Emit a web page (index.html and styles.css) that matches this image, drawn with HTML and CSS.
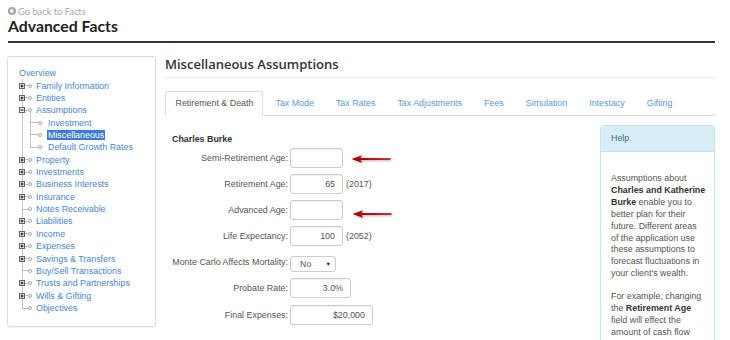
FILE: index.html
```html
<!DOCTYPE html>
<html>
<head>
<meta charset="utf-8">
<title>Advanced Facts</title>
<link rel="stylesheet" href="styles.css">
</head>
<body>
<div class="page">
  <div class="back">
    <svg viewBox="0 0 8 8" class="back-ico"><circle cx="4" cy="4" r="4" fill="#a5a5a5"/><path d="M4.6 2 L2.5 4 L4.6 6 M2.7 4 H6" stroke="#fff" stroke-width="1.2" fill="none"/></svg>
    <span>Go back to Facts</span>
  </div>
  <h1 class="title">Advanced Facts</h1>
  <div class="rule"></div>

  <div class="cols">
    <nav class="tree">
      <div class="row"><a href="#">Overview</a></div>
      <ul class="lvl1">
        <li><div class="row"><span class="conn"><svg class="exp" viewBox="0 0 6 6"><rect x=".5" y=".5" width="5" height="5" fill="#eee" stroke="#666"/><path d="M1.5 3h3M3 1.5v3" stroke="#111"/></svg></span><span class="dot"></span><a href="#">Family Information</a></div></li>
        <li><div class="row"><span class="conn"><svg class="exp" viewBox="0 0 6 6"><rect x=".5" y=".5" width="5" height="5" fill="#eee" stroke="#666"/><path d="M1.5 3h3M3 1.5v3" stroke="#111"/></svg></span><span class="dot"></span><a href="#">Entities</a></div></li>
        <li><div class="row"><span class="conn"><svg class="exp" viewBox="0 0 6 6"><rect x=".5" y=".5" width="5" height="5" fill="#eee" stroke="#666"/><path d="M1.5 3h3" stroke="#111"/></svg></span><span class="dot"></span><a href="#">Assumptions</a></div>
          <ul class="lvl2">
            <li><div class="row"><span class="conn"></span><span class="dot"></span><a href="#">Investment</a></div></li>
            <li><div class="row"><span class="conn"></span><span class="dot"></span><a href="#" class="sel">Miscellaneous</a></div></li>
            <li><div class="row"><span class="conn"></span><span class="dot"></span><a href="#">Default Growth Rates</a></div></li>
          </ul>
        </li>
        <li><div class="row"><span class="conn"><svg class="exp" viewBox="0 0 6 6"><rect x=".5" y=".5" width="5" height="5" fill="#eee" stroke="#666"/><path d="M1.5 3h3M3 1.5v3" stroke="#111"/></svg></span><span class="dot"></span><a href="#">Property</a></div></li>
        <li><div class="row"><span class="conn"><svg class="exp" viewBox="0 0 6 6"><rect x=".5" y=".5" width="5" height="5" fill="#eee" stroke="#666"/><path d="M1.5 3h3M3 1.5v3" stroke="#111"/></svg></span><span class="dot"></span><a href="#">Investments</a></div></li>
        <li><div class="row"><span class="conn"><svg class="exp" viewBox="0 0 6 6"><rect x=".5" y=".5" width="5" height="5" fill="#eee" stroke="#666"/><path d="M1.5 3h3M3 1.5v3" stroke="#111"/></svg></span><span class="dot"></span><a href="#">Business Interests</a></div></li>
        <li><div class="row"><span class="conn"><svg class="exp" viewBox="0 0 6 6"><rect x=".5" y=".5" width="5" height="5" fill="#eee" stroke="#666"/><path d="M1.5 3h3M3 1.5v3" stroke="#111"/></svg></span><span class="dot"></span><a href="#">Insurance</a></div></li>
        <li><div class="row"><span class="conn"></span><span class="dot"></span><a href="#">Notes Receivable</a></div></li>
        <li><div class="row"><span class="conn"><svg class="exp" viewBox="0 0 6 6"><rect x=".5" y=".5" width="5" height="5" fill="#eee" stroke="#666"/><path d="M1.5 3h3M3 1.5v3" stroke="#111"/></svg></span><span class="dot"></span><a href="#">Liabilities</a></div></li>
        <li><div class="row"><span class="conn"><svg class="exp" viewBox="0 0 6 6"><rect x=".5" y=".5" width="5" height="5" fill="#eee" stroke="#666"/><path d="M1.5 3h3M3 1.5v3" stroke="#111"/></svg></span><span class="dot"></span><a href="#">Income</a></div></li>
        <li><div class="row"><span class="conn"><svg class="exp" viewBox="0 0 6 6"><rect x=".5" y=".5" width="5" height="5" fill="#eee" stroke="#666"/><path d="M1.5 3h3M3 1.5v3" stroke="#111"/></svg></span><span class="dot"></span><a href="#">Expenses</a></div></li>
        <li><div class="row"><span class="conn"><svg class="exp" viewBox="0 0 6 6"><rect x=".5" y=".5" width="5" height="5" fill="#eee" stroke="#666"/><path d="M1.5 3h3M3 1.5v3" stroke="#111"/></svg></span><span class="dot"></span><a href="#">Savings &amp; Transfers</a></div></li>
        <li><div class="row"><span class="conn"></span><span class="dot"></span><a href="#">Buy/Sell Transactions</a></div></li>
        <li><div class="row"><span class="conn"><svg class="exp" viewBox="0 0 6 6"><rect x=".5" y=".5" width="5" height="5" fill="#eee" stroke="#666"/><path d="M1.5 3h3M3 1.5v3" stroke="#111"/></svg></span><span class="dot"></span><a href="#">Trusts and Partnerships</a></div></li>
        <li><div class="row"><span class="conn"><svg class="exp" viewBox="0 0 6 6"><rect x=".5" y=".5" width="5" height="5" fill="#eee" stroke="#666"/><path d="M1.5 3h3M3 1.5v3" stroke="#111"/></svg></span><span class="dot"></span><a href="#">Wills &amp; Gifting</a></div></li>
        <li><div class="row"><span class="conn"></span><span class="dot"></span><a href="#">Objectives</a></div></li>
      </ul>
    </nav>

    <main class="main">
      <h2 class="heading">Miscellaneous Assumptions</h2>
      <ul class="tabs">
        <li><a href="#" class="active">Retirement &amp; Death</a></li>
        <li><a href="#">Tax Mode</a></li>
        <li><a href="#">Tax Rates</a></li>
        <li><a href="#">Tax Adjustments</a></li>
        <li><a href="#">Fees</a></li>
        <li><a href="#">Simulation</a></li>
        <li><a href="#">Intestacy</a></li>
        <li><a href="#">Gifting</a></li>
      </ul>
      <div class="content">
        <div class="form">
          <div class="person">Charles Burke</div>
          <div class="grid">
            <label>Semi-Retirement Age:</label>
            <div class="field"><input class="inp w53" type="text" value=""></div>
            <label>Retirement Age:</label>
            <div class="field"><input class="inp w53" type="text" value="65"><span class="suf">(2017)</span></div>
            <label>Advanced Age:</label>
            <div class="field"><input class="inp w53" type="text" value=""></div>
            <label>Life Expectancy:</label>
            <div class="field"><input class="inp w53" type="text" value="100"><span class="suf">(2052)</span></div>
            <label>Monte Carlo Affects Mortality:</label>
            <div class="field"><div class="select"><span>No</span><span class="caret">▼</span></div></div>
            <label>Probate Rate:</label>
            <div class="field"><input class="inp w61" type="text" value="3.0%"></div>
            <label>Final Expenses:</label>
            <div class="field"><input class="inp w83" type="text" value="$20,000"></div>
          </div>
          <svg class="arrow a1" viewBox="0 0 42 12"><path d="M0.5 6 L11 2.3 L9.4 5 L39.5 5.3 L39.5 6.7 L9.4 7 L11 9.7 Z" fill="#b60000"/></svg>
          <svg class="arrow a2" viewBox="0 0 42 12"><path d="M0.5 6 L11 2.3 L9.4 5 L39.5 5.3 L39.5 6.7 L9.4 7 L11 9.7 Z" fill="#b60000"/></svg>
        </div>
        <aside class="help">
          <div class="help-h">Help</div>
          <div class="help-b">
            <p>Assumptions about<br><b>Charles and Katherine</b><br><b>Burke</b> enable you to<br>better plan for their<br>future. Different areas<br>of the application use<br>these assumptions to<br>forecast fluctuations in<br>your client's wealth.</p>
            <p>For example, changing<br>the <b>Retirement Age</b><br>field will effect the<br>amount of cash flow</p>
          </div>
        </aside>
      </div>
    </main>
  </div>
</div>
</body>
</html>
```
FILE: styles.css
```css
* { box-sizing: border-box; }
html, body { margin: 0; height: 340px; overflow: hidden; background: #fff; }
body { font-family: "Liberation Sans", Arial, sans-serif; font-size: 8.9px; color: #555; }

.page { padding: 0 15px 0 8px; }

.back { display: flex; align-items: center; gap: 2px; height: 12px; margin-top: 5px; font-family: Lato, "Liberation Sans", sans-serif; font-size: 9.3px; color: #a8a8a8; }
.back-ico { width: 8px; height: 8px; display: block; }
.title { margin: 0; font-family: Lato, "Liberation Sans", sans-serif; font-weight: 700; font-size: 15.8px; line-height: 18px; color: #222; }
.rule { height: 2px; background: #333; margin-top: 6px; }

.cols { display: flex; gap: 9px; margin-top: 13px; margin-left: -1px; }

/* tree */
.tree { flex: 0 0 149px; height: 271px; border: 1px solid #ddd; border-radius: 3px; padding: 10px 0 0 11px; box-shadow: 0 1px 2px rgba(0,0,0,.06); }
.tree a { color: #4a86cf; text-decoration: none; }
.row { display: flex; align-items: center; height: 12.37px; white-space: nowrap; }
.tree ul { list-style: none; margin: 0; padding: 0; }
.lvl1 { background: linear-gradient(#c8c8c8, #c8c8c8) no-repeat 3px 0 / 1px calc(100% - 6px); }
.conn { flex: 0 0 9px; align-self: stretch; display: flex; align-items: center; background: linear-gradient(#bbb, #bbb) no-repeat 3px 50% / 6px 1px; }
.exp { width: 6px; height: 6px; display: block; }
.dot { flex: 0 0 4px; height: 4px; border: 1px solid #a5a5a5; border-radius: 50%; background: #fff; margin-right: 4px; }
.tree .lvl2 { margin: -4px 0 0 11px; padding-top: 4px; background: linear-gradient(#c8c8c8, #c8c8c8) no-repeat 0 0 / 1px calc(100% - 6px); }
.lvl2 .conn { flex: 0 0 8px; background: linear-gradient(#bbb, #bbb) no-repeat 0 50% / 8px 1px; }
.lvl2 .dot { margin-right: 6px; }
.tree a.sel { margin-left: -1px; padding: 0 1px; line-height: 10px; background: #3a7bd5; color: #fff; }

/* main */
.main { flex: 1; min-width: 0; }
.heading { margin: 0; font-family: "Open Sans", "Liberation Sans", sans-serif; font-weight: 600; font-size: 13px; line-height: 16px; color: #333; padding-bottom: 5px; border-bottom: 1px solid #eee; }

.tabs { display: flex; list-style: none; margin: 13px 0 0; padding: 0; border-bottom: 1px solid #ddd; }
.tabs a { display: block; padding: 6px 9px 6px 9.5px; line-height: 11px; border: 1px solid transparent; border-radius: 3px 3px 0 0; margin: 0 1.5px -1px 0; color: #5b9bd8; text-decoration: none; }
.tabs a.active { border-color: #ddd #ddd #fff; background: #fff; color: #555; }

.content { display: flex; padding-top: 9px; }
.form { flex: 1; position: relative; padding: 8px 0 0 7px; }
.person { font-weight: bold; color: #333; line-height: 12px; }
.grid { display: grid; grid-template-columns: 116px auto; grid-auto-rows: 20px; column-gap: 2px; row-gap: 6.1px; margin-top: 3px; align-items: center; }
.grid label { text-align: right; color: #555; white-space: nowrap; }
.field { display: flex; align-items: center; gap: 2px; height: 20px; }
.inp { height: 20px; border: 1px solid #ccc; border-radius: 3px; padding: 0 7px; font: inherit; color: #555; text-align: right; background: #fff; box-shadow: inset 0 1px 1px rgba(0,0,0,.06); outline: none; }
.w53 { width: 53px; }
.w61 { width: 61px; }
.w83 { width: 83px; }
.suf { margin-left: 1px; color: #555; }
.select { width: 46px; height: 16px; margin-top: 3px; border: 1px solid #ccc; border-radius: 3px; display: flex; align-items: center; justify-content: space-between; padding: 0 4px 0 9px; color: #555; background: #fff; }
.caret { font-size: 5.5px; color: #222; }

.arrow { position: absolute; width: 42px; height: 12px; filter: drop-shadow(1px 1.5px 1px rgba(0,0,0,.35)); }
.a1 { left: 186px; top: 28px; }
.a2 { left: 187px; top: 82.5px; }

.help { flex: 0 0 115px; height: 240px; border: 1px solid #bce8f1; border-radius: 3px; }
.help-h { height: 26px; line-height: 25px; background: #d9edf7; border-bottom: 1px solid #bce8f1; padding-left: 10px; color: #31708f; }
.help-b { padding: 21px 4px 0 10px; line-height: 11.9px; color: #555; white-space: nowrap; }
.help-b p { margin: 0 0 11px; }
.help-b b { color: #333; }
```
